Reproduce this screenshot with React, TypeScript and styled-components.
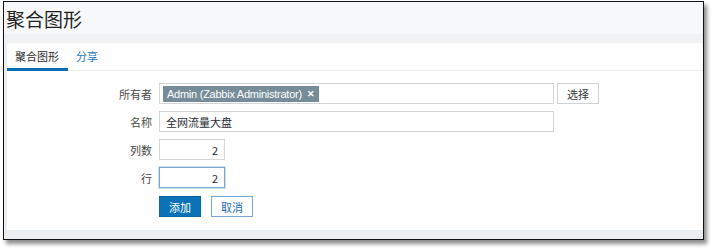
import React from 'react';
import styled, { createGlobalStyle } from 'styled-components';

const GlobalStyle = createGlobalStyle`
  html, body {
    margin: 0;
    padding: 0;
    background: #ffffff;
  }
  body {
    font-family: "Liberation Sans", Arial, "Noto Sans CJK SC", sans-serif;
    font-size: 11px;
    color: #1f2c33;
  }
`;

const App: React.FC = () => (
  <Page>
    <GlobalStyle />
    <Frame>
      <Header>
        <Title>聚合图形</Title>
      </Header>
      <Band />
      <Card>
        <Tabs>
          <Tab active>聚合图形</Tab>
          <Tab>分享</Tab>
        </Tabs>
        <Form>
          <Row>
            <Label>所有者</Label>
            <MultiSelect>
              <Tag>
                Admin (Zabbix Administrator)
                <TagClose>✕</TagClose>
              </Tag>
            </MultiSelect>
            <GreyButton>选择</GreyButton>
          </Row>
          <Row>
            <Label>名称</Label>
            <TextInput defaultValue="全网流量大盘" wide />
          </Row>
          <Row>
            <Label>列数</Label>
            <TextInput defaultValue="2" numeric />
          </Row>
          <Row>
            <Label>行</Label>
            <TextInput defaultValue="2" numeric focused />
          </Row>
          <Actions>
            <PrimaryButton>添加</PrimaryButton>
            <OutlineButton>取消</OutlineButton>
          </Actions>
        </Form>
      </Card>
      <Footer />
    </Frame>
  </Page>
);

export default App;

const Page = styled.div`
  width: 712px;
  height: 249px;
  padding: 1px 0 0 3px;
  box-sizing: border-box;
`;

const Frame = styled.div`
  width: 701px;
  height: 239px;
  box-sizing: border-box;
  border: 1.5px solid #111111;
  box-shadow: 3px 4px 4px rgba(0, 0, 0, 0.45);
  background: #ebeef0;
  display: flex;
  flex-direction: column;
  overflow: hidden;
`;

const Header = styled.div`
  height: 32px;
  background: #f7f8f9;
  display: flex;
  align-items: center;
  padding-left: 2px;
`;

const Title = styled.h1`
  margin: 0;
  font-size: 19px;
  font-weight: normal;
  color: #1f1f1f;
  font-family: "Noto Sans CJK SC", sans-serif;
`;

const Band = styled.div`
  height: 9px;
  background: #eff1f2;
`;

const Card = styled.div`
  flex: 1;
  margin-left: 3px;
  background: #ffffff;
  display: flex;
  flex-direction: column;
`;

const Tabs = styled.div`
  display: flex;
  height: 27px;
  border-bottom: 1px solid #eeeeee;
`;

const Tab = styled.div<{ active?: boolean }>`
  display: flex;
  align-items: center;
  padding: 0 9px 0 8px;
  font-family: "Noto Sans CJK SC", sans-serif;
  font-size: 11px;
  color: ${({ active }) => (active ? '#2b2b2b' : '#1f78c1')};
  border-bottom: 3px solid ${({ active }) => (active ? '#0a6eb4' : 'transparent')};
  margin-bottom: -1px;
`;

const Form = styled.div`
  display: flex;
  flex-direction: column;
  gap: 7px;
  padding: 12px 0 0 0;
`;

const Row = styled.div`
  display: flex;
  align-items: center;
`;

const Label = styled.div`
  width: 145px;
  padding-right: 7px;
  text-align: right;
  font-family: "Noto Sans CJK SC", sans-serif;
  font-size: 11px;
  color: #4a4a4a;
`;

const fieldBase = `
  height: 21px;
  box-sizing: border-box;
  border: 1px solid #d2d6d9;
  background: #ffffff;
`;

const MultiSelect = styled.div`
  ${fieldBase}
  width: 395px;
  display: flex;
  align-items: center;
  padding-left: 3px;
`;

const Tag = styled.span`
  display: inline-flex;
  align-items: center;
  height: 16px;
  padding: 0 4px;
  background: #768d99;
  color: #ffffff;
  font-family: "Liberation Sans", Arial, sans-serif;
  font-size: 11px;
  letter-spacing: -0.25px;
`;

const TagClose = styled.span`
  margin-left: 5px;
  font-size: 9px;
  font-weight: bold;
`;

const TextInput = styled.input<{ wide?: boolean; numeric?: boolean; focused?: boolean }>`
  ${fieldBase}
  width: ${({ wide }) => (wide ? '395px' : '66px')};
  padding: 0 6px;
  font-family: "Noto Sans CJK SC", "Liberation Sans", sans-serif;
  font-size: 11px;
  color: #1f2c33;
  text-align: ${({ numeric }) => (numeric ? 'right' : 'left')};
  border-color: ${({ focused }) => (focused ? '#7aa7cf' : '#d2d6d9')};
  box-shadow: ${({ focused }) => (focused ? '0 0 0 1px #cfe0ef' : 'none')};
  outline: none;
`;

const buttonBase = `
  height: 21px;
  box-sizing: border-box;
  padding: 0;
  width: 42px;
  font-family: "Noto Sans CJK SC", sans-serif;
  font-size: 11px;
  cursor: pointer;
`;

const GreyButton = styled.button`
  ${buttonBase}
  margin-left: 3px;
  background: #ffffff;
  border: 1px solid #cfd3d6;
  color: #3a3a3a;
`;

const Actions = styled.div`
  display: flex;
  gap: 10px;
  padding-left: 152px;
  margin-top: 1px;
`;

const PrimaryButton = styled.button`
  ${buttonBase}
  background: #0a72b7;
  border: 1px solid #0a66a6;
  color: #ffffff;
`;

const OutlineButton = styled.button`
  ${buttonBase}
  background: #ffffff;
  border: 1px solid #78a8d3;
  color: #1c6bb0;
`;

const Footer = styled.div`
  height: 9px;
  background: #ebeef0;
`;
